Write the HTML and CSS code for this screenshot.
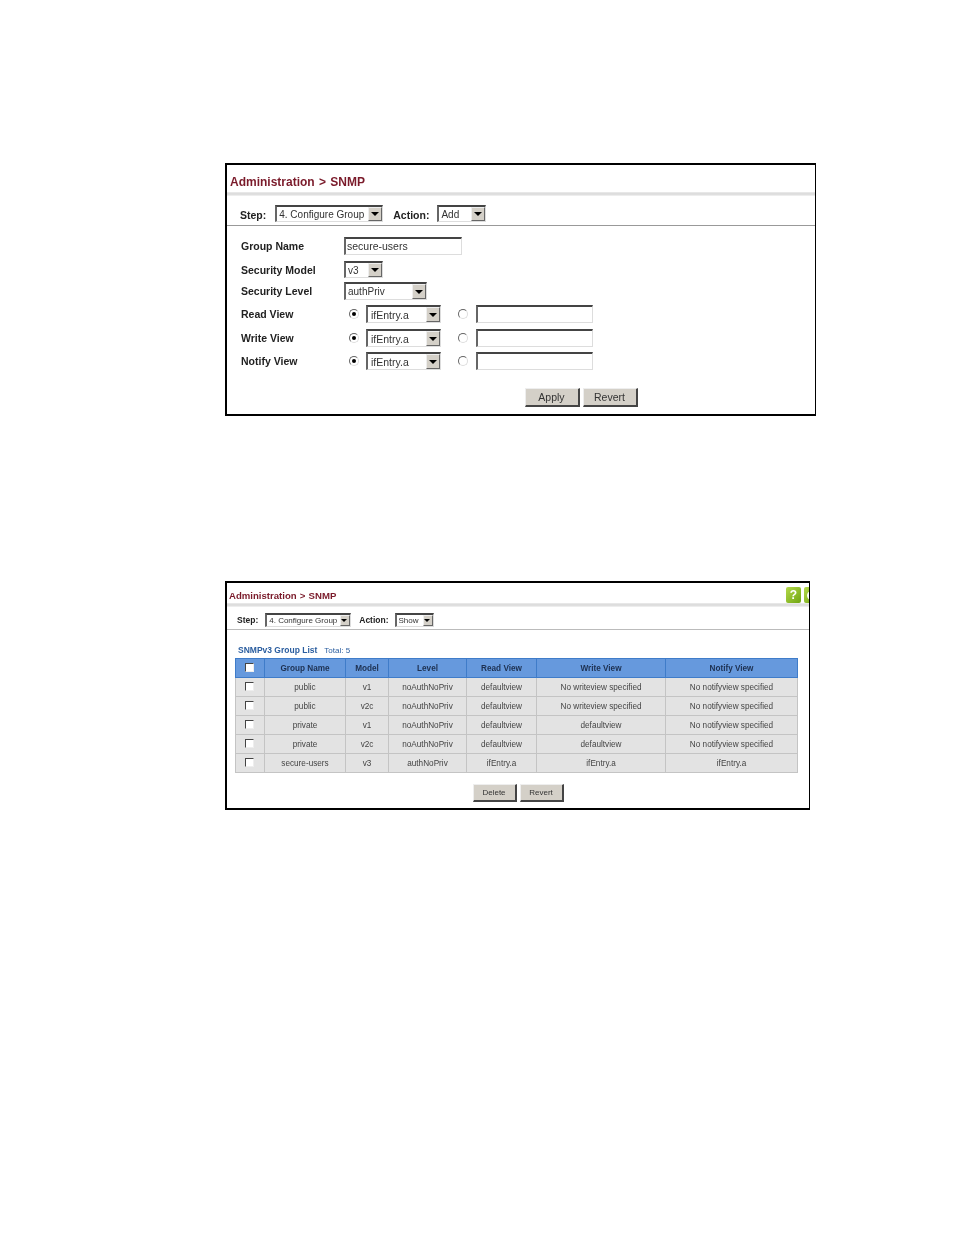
FILE: index.html
```html
<!DOCTYPE html>
<html lang="en">
<head>
  <meta charset="UTF-8">
  <title>SNMP</title>
  <link rel="stylesheet" href="styles.css">
</head>
<body>
  <div class="panel panel-form">
    <div class="title-row"><h1>Administration &gt; SNMP</h1></div>
    <div class="band"></div>
    <div class="step-row">
      <span class="step-label">Step:</span>
      <div class="select sel-step"><span>4. Configure Group</span><i class="arrow"></i></div>
      <span class="step-label action-label">Action:</span>
      <div class="select sel-action"><span>Add</span><i class="arrow"></i></div>
    </div>
    <div class="form-grid">
      <div class="row row-name"><label>Group Name</label><div class="input name-input">secure-users</div></div>
      <div class="row row-model"><label>Security Model</label><div class="select sel-model"><span>v3</span><i class="arrow"></i></div></div>
      <div class="row row-level"><label>Security Level</label><div class="select sel-level"><span>authPriv</span><i class="arrow"></i></div></div>
      <div class="row row-view">
        <label>Read View</label>
        <i class="radio on"></i>
        <div class="select sel-view"><span>ifEntry.a</span><i class="arrow"></i></div>
        <i class="radio off"></i>
        <div class="input view-input"></div>
      </div>
      <div class="row row-view">
        <label>Write View</label>
        <i class="radio on"></i>
        <div class="select sel-view"><span>ifEntry.a</span><i class="arrow"></i></div>
        <i class="radio off"></i>
        <div class="input view-input"></div>
      </div>
      <div class="row row-view">
        <label>Notify View</label>
        <i class="radio on"></i>
        <div class="select sel-view"><span>ifEntry.a</span><i class="arrow"></i></div>
        <i class="radio off"></i>
        <div class="input view-input"></div>
      </div>
    </div>
    <div class="buttons">
      <button class="btn">Apply</button>
      <button class="btn">Revert</button>
    </div>
  </div>

  <div class="panel panel-list">
    <div class="title-row small">
      <h1>Administration &gt; SNMP</h1>
      <div class="icons">
        <span class="help">?</span>
        <span class="help clipped"></span>
      </div>
    </div>
    <div class="band"></div>
    <div class="step-row small">
      <span class="step-label">Step:</span>
      <div class="select sel-step"><span>4. Configure Group</span><i class="arrow"></i></div>
      <span class="step-label action-label">Action:</span>
      <div class="select sel-action"><span>Show</span><i class="arrow"></i></div>
    </div>
    <div class="list-head"><b>SNMPv3 Group List</b><span>Total: 5</span></div>
    <table class="groups">
      <thead>
        <tr>
          <th class="c-check"><i class="check"></i></th>
          <th class="c-name">Group Name</th>
          <th class="c-model">Model</th>
          <th class="c-level">Level</th>
          <th class="c-read">Read View</th>
          <th class="c-write">Write View</th>
          <th class="c-notify">Notify View</th>
        </tr>
      </thead>
      <tbody>
        <tr><td><i class="check"></i></td><td>public</td><td>v1</td><td>noAuthNoPriv</td><td>defaultview</td><td>No writeview specified</td><td>No notifyview specified</td></tr>
        <tr><td><i class="check"></i></td><td>public</td><td>v2c</td><td>noAuthNoPriv</td><td>defaultview</td><td>No writeview specified</td><td>No notifyview specified</td></tr>
        <tr><td><i class="check"></i></td><td>private</td><td>v1</td><td>noAuthNoPriv</td><td>defaultview</td><td>defaultview</td><td>No notifyview specified</td></tr>
        <tr><td><i class="check"></i></td><td>private</td><td>v2c</td><td>noAuthNoPriv</td><td>defaultview</td><td>defaultview</td><td>No notifyview specified</td></tr>
        <tr><td><i class="check"></i></td><td>secure-users</td><td>v3</td><td>authNoPriv</td><td>ifEntry.a</td><td>ifEntry.a</td><td>ifEntry.a</td></tr>
      </tbody>
    </table>
    <div class="buttons">
      <button class="btn">Delete</button>
      <button class="btn">Revert</button>
    </div>
  </div>
</body>
</html>
```

FILE: styles.css
```css
html, body {
  margin: 0;
  padding: 0;
  background: #fff;
}
body {
  padding: 163px 0 0 225px;
  height: 1235px;
  box-sizing: border-box;
  font-family: "Liberation Sans", Arial, sans-serif;
  color: #222;
}
.panel {
  box-sizing: border-box;
  border: 2px solid #000;
  border-right-width: 1px;
  background: #fff;
  overflow: hidden;
}
/* the source is a scaled-down print, everything is slightly soft */
.panel > * {
  filter: blur(0.3px);
}
.panel-form {
  width: 591px;
  height: 253px;
  margin-bottom: 165px;
}
.panel-list {
  width: 585px;
  height: 229px;
}

/* title */
.title-row {
  height: 21px;
  padding: 6px 0 0 3px;
  display: flex;
  align-items: center;
  justify-content: space-between;
}
.title-row h1 {
  margin: 0;
  font-size: 12px;
  font-weight: bold;
  color: #7a1a2a;
  word-spacing: 1px;
}
.band {
  height: 4px;
  background: linear-gradient(#ececec, #d8d8d8 50%, #f4f4f4);
}
.title-row.small {
  height: 16px;
  padding: 4px 0 0 2px;
}
.title-row.small h1 {
  font-size: 9.6px;
  word-spacing: 0.5px;
}
.icons {
  display: flex;
  gap: 3px;
  margin-right: -10px;
  margin-top: -1px;
}
.help {
  position: relative;
  width: 15px;
  height: 16px;
  border-radius: 2px;
  background: linear-gradient(135deg, #b4d94a, #6fa512);
  color: #fff;
  font-size: 12px;
  font-weight: bold;
  line-height: 16px;
  text-align: center;
}
.help.clipped::before {
  content: "";
  position: absolute;
  left: 3px;
  top: 4px;
  width: 5px;
  height: 5px;
  border: 2px solid #fff;
  border-radius: 50%;
}

/* step row */
.step-row {
  height: 23px;
  padding: 6px 0 0 13px;
  display: flex;
  align-items: center;
  border-bottom: 1px solid #999;
}
.step-label {
  font-size: 10.5px;
  font-weight: bold;
  margin-right: 9px;
  padding-top: 3px;
}
.action-label {
  margin-left: 10px;
  margin-right: 8px;
}
.step-row.small {
  height: 18px;
  padding: 4px 0 0 10px;
  border-bottom-color: #bbb;
}
.step-row.small .step-label {
  font-size: 8.5px;
  padding-top: 0;
  margin-right: 7px;
}
.step-row.small .action-label {
  margin-left: 8px;
  margin-right: 6px;
}
.step-row.small .select {
  height: 14px;
  font-size: 8px;
}
.step-row.small .sel-step {
  width: 86px;
}
.step-row.small .sel-action {
  width: 39px;
}
.step-row.small .arrow {
  width: 10px;
}
.step-row.small .arrow::after {
  border-width: 3px 3px 0;
}

/* fake controls */
.select, .input {
  box-sizing: border-box;
  border: 1px solid #ddd;
  border-top: 2px solid #444;
  border-left: 2px solid #666;
  background: #fff;
  font-size: 10px;
  color: #333;
}
.select {
  display: flex;
  align-items: center;
  justify-content: space-between;
  padding-left: 2px;
}
.arrow {
  position: relative;
  align-self: stretch;
  width: 14px;
  background: #d4d0c8;
  border: 1px solid #666;
  border-top-color: #eee;
  border-left-color: #eee;
  box-sizing: border-box;
}
.arrow::after {
  content: "";
  position: absolute;
  left: 50%;
  top: 50%;
  margin: -2px 0 0 -4px;
  border: solid transparent;
  border-width: 4px 4px 0;
  border-top-color: #000;
}
.sel-step {
  width: 108px;
  height: 17px;
}
.sel-action {
  width: 49px;
  height: 17px;
}
.input {
  padding-left: 1px;
  line-height: 14px;
}

/* form */
.form-grid {
  padding: 11px 0 0 14px;
}
.row {
  display: flex;
  align-items: center;
}
.row label {
  width: 103px;
  flex: none;
  font-size: 10.5px;
  font-weight: bold;
}
.row-name {
  height: 18px;
}
.name-input {
  width: 118px;
  height: 18px;
  font-size: 10.5px;
}
.row-model {
  height: 17px;
  margin-top: 6px;
}
.sel-model {
  width: 39px;
  height: 17px;
}
.row-level {
  height: 18px;
  margin-top: 4px;
}
.sel-level {
  width: 83px;
  height: 18px;
}
.row-view {
  height: 18px;
  margin-top: 6px;
}
.row-level + .row-view,
.row-view:last-child {
  margin-top: 5px;
}
.sel-view {
  width: 75px;
  height: 18px;
  margin: 0 12px 0 7px;
  padding-left: 3px;
  font-size: 10.5px;
}
.view-input {
  width: 117px;
  height: 18px;
  margin-left: 8px;
}
.radio {
  position: relative;
  flex: none;
  box-sizing: border-box;
  width: 10px;
  height: 10px;
  margin-left: 5px;
  border-radius: 50%;
  border: 1.5px solid #666;
  border-right-color: #ddd;
  border-bottom-color: #ddd;
}
.radio.on::after {
  content: "";
  position: absolute;
  left: 1.5px;
  top: 1.5px;
  width: 4px;
  height: 4px;
  border-radius: 50%;
  background: #000;
}

/* buttons */
.buttons {
  display: flex;
  justify-content: center;
  gap: 3px;
}
.btn {
  box-sizing: border-box;
  height: 19px;
  width: 55px;
  padding: 0;
  border: 1px solid #eee;
  border-right: 2px solid #444;
  border-bottom: 2px solid #444;
  background: #d4d0c8;
  font-family: inherit;
  font-size: 10.5px;
  color: #333;
}
.panel-form .buttons {
  padding: 18px 0 0 120px;
}
.panel-list .buttons {
  padding-top: 11px;
}
.panel-list .btn {
  width: 44px;
  height: 18px;
  font-size: 8px;
}

/* group list */
.list-head {
  height: 28px;
  padding-left: 11px;
  display: flex;
  align-items: flex-end;
  gap: 7px;
  color: #2a5d9f;
  box-sizing: border-box;
  padding-bottom: 3px;
}
.list-head b {
  font-size: 8.5px;
}
.list-head span {
  font-size: 8px;
}
.groups {
  margin-left: 8px;
  width: 562px;
  table-layout: fixed;
  border-collapse: collapse;
  font-size: 8.2px;
  color: #444;
}
.groups th {
  height: 18px;
  padding: 0;
  background: #6699dd;
  border: 1px solid #3f7cc9;
  color: #1d3050;
  font-size: 8.2px;
  font-weight: bold;
}
.groups td {
  height: 18px;
  padding: 0;
  text-align: center;
  background: #e3e3e3;
  border: 1px solid #c4c4c4;
}
.c-check { width: 28px; }
.c-name { width: 80px; }
.c-model { width: 42px; }
.c-level { width: 77px; }
.c-read { width: 69px; }
.c-write { width: 128px; }
.c-notify { width: 131px; }
.check {
  display: block;
  box-sizing: border-box;
  width: 9px;
  height: 9px;
  margin: 0 auto;
  position: relative;
  left: -1px;
  top: -1px;
  background: #fff;
  border: 1px solid #eee;
  border-top: 1px solid #444;
  border-left: 1px solid #444;
}
```
